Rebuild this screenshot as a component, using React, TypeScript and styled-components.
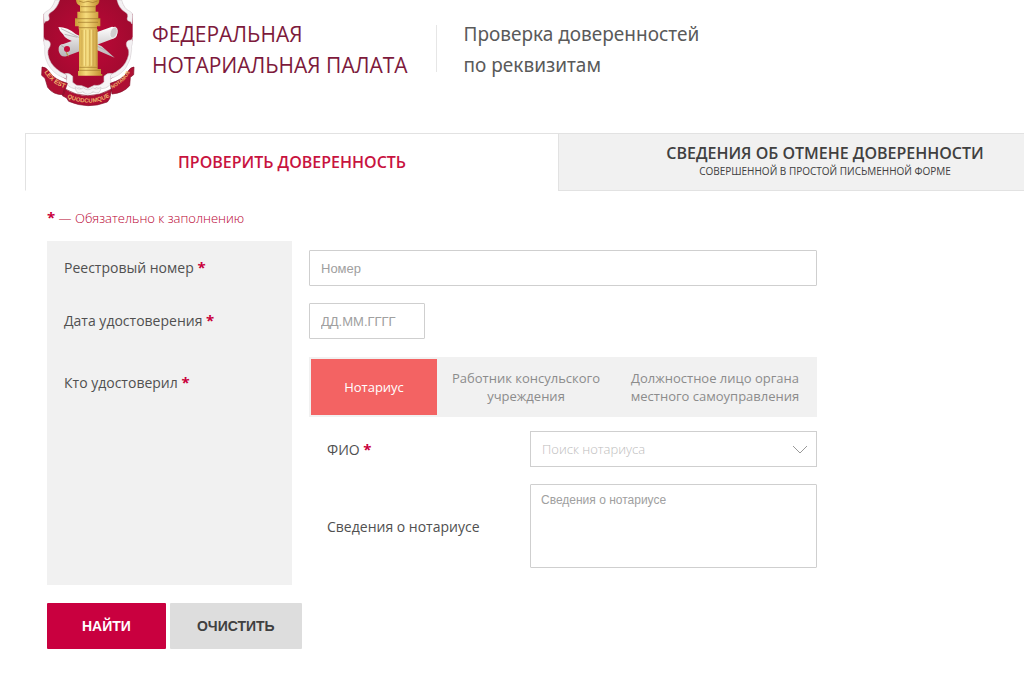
import React, { useState } from "react";
import styled, { createGlobalStyle } from "styled-components";

const GlobalStyle = createGlobalStyle`
  *, *::before, *::after { box-sizing: border-box; }
  body {
    margin: 0;
    background: #fff;
    color: #505050;
    font-family: "Open Sans", "Noto Sans", sans-serif;
    font-size: 14px;
  }
`;

const Page = styled.div`
  min-height: 100vh;
  overflow-x: clip;
`;

const Header = styled.header`
  display: flex;
  align-items: flex-start;
  min-height: 133px;
  padding-left: 41px;
`;

const Brand = styled.a`
  display: flex;
  gap: 17px;
  color: #7d1a3c;
  text-decoration: none;
`;

const Crest = styled.svg`
  display: block;
  flex: none;
  width: 94px;
  height: 107px;
`;

const BrandName = styled.span`
  padding-top: 19px;
  font-size: 21px;
  line-height: 31px;
  white-space: nowrap;
`;

const PageTitle = styled.h1`
  margin: 25px 0 0 28px;
  padding: 2px 0 0 27px;
  height: 47px;
  border-left: 1px solid #e6e6e6;
  display: flex;
  align-items: center;
  color: #5a5a5a;
  font: 400 19px/31px "Noto Sans", sans-serif;
  white-space: nowrap;
`;

const Tabs = styled.nav`
  display: grid;
  grid-template-columns: repeat(2, minmax(533px, 1fr));
  margin-left: 25px;
`;

const Tab = styled.button<{ $active?: boolean }>`
  display: flex;
  flex-direction: column;
  align-items: center;
  justify-content: center;
  height: 58px;
  padding: 0;
  border: 1px solid #e2e2e2;
  border-right: 0;
  border-bottom-color: ${(p) => (p.$active ? "transparent" : "#e2e2e2")};
  background: ${(p) => (p.$active ? "#fff" : "#f1f1f1")};
  color: ${(p) => (p.$active ? "#c8133f" : "#404040")};
  font: 600 16px/20px "Open Sans", sans-serif;
  text-transform: uppercase;
  cursor: pointer;
`;

const TabNote = styled.small`
  padding-bottom: 2px;
  font-size: 10px;
  font-weight: 500;
  line-height: 16px;
`;

const Form = styled.form`
  max-width: 817px;
  padding: 17px 0 0 47px;
`;

const Required = styled.p`
  margin: 0 0 13px;
  color: #b8002f;
  font-size: 13px;
  font-weight: 300;
  line-height: 20px;
`;

const Star = styled.b`
  color: #c9003c;
  font-size: 15px;
  font-weight: 700;
  line-height: 16px;
`;

const Row = styled.div`
  display: grid;
  grid-template-columns: 245px 1fr;
  column-gap: 17px;
`;

const LabelCell = styled.div<{ $tall?: boolean }>`
  padding: ${(p) => (p.$tall ? "26px" : "17px")} 17px 0;
  background: #f1f1f1;
  line-height: 20px;
`;

const ControlCell = styled.div<{ $tall?: boolean }>`
  padding: ${(p) => (p.$tall ? "10px 0 17px" : "9px 0 8px")};
`;

const TextInput = styled.input<{ $short?: boolean }>`
  display: block;
  width: ${(p) => (p.$short ? "116px" : "100%")};
  height: 36px;
  padding: 0 11px;
  border: 1px solid #cfcfcf;
  border-radius: 1px;
  background: #fff;
  color: #505050;
  font: 13px "Liberation Sans", sans-serif;
  &::placeholder { color: #a0a0a0; opacity: 1; }
`;

const Segments = styled.fieldset`
  display: grid;
  grid-template-columns: 126px 178px 1fr;
  margin: 0;
  padding: 2px;
  border: 0;
  min-width: 0;
  height: 60px;
  background: #f1f1f1;
`;

const Segment = styled.label`
  display: flex;
  align-items: center;
  justify-content: center;
  padding: 0 12px;
  color: #8c8c8c;
  font-size: 13px;
  line-height: 18px;
  text-align: center;
  cursor: pointer;
  &:has(input:checked) { background: #f36363; color: #fff; }
`;

const SegmentInput = styled.input`
  position: absolute;
  opacity: 0;
  pointer-events: none;
`;

const SubRow = styled.div<{ $top: number }>`
  display: grid;
  grid-template-columns: 203px 1fr;
  align-items: center;
  margin-top: ${(p) => p.$top}px;
  padding-left: 18px;
`;

const SelectWrap = styled.div`
  display: grid;
  align-items: center;
  & > * { grid-area: 1 / 1; }
`;

const Select = styled.select`
  appearance: none;
  width: 100%;
  height: 36px;
  padding: 0 11px;
  border: 1px solid #cfcfcf;
  border-radius: 0;
  background: #fff;
  color: #bdbdbd;
  font: 300 13px "Open Sans", sans-serif;
`;

const Chevron = styled.svg`
  justify-self: end;
  width: 16px;
  height: 9px;
  margin-right: 9px;
  pointer-events: none;
`;

const TextArea = styled.textarea`
  display: block;
  width: 100%;
  height: 84px;
  padding: 7px 10px;
  border: 1px solid #cfcfcf;
  border-radius: 1px;
  resize: none;
  font: 12px/16px "Liberation Sans", sans-serif;
  &::placeholder { color: #a0a0a0; opacity: 1; }
`;

const Actions = styled.div`
  display: flex;
  gap: 4px;
  margin-top: 18px;
`;

const ActionButton = styled.button<{ $primary?: boolean }>`
  height: 46px;
  padding: 0 ${(p) => (p.$primary ? "35px" : "27px")};
  border: 0;
  border-radius: 1px;
  background: ${(p) => (p.$primary ? "#c9003f" : "#dddddd")};
  color: ${(p) => (p.$primary ? "#fff" : "#404040")};
  font: 700 14px "Liberation Sans", sans-serif;
  text-transform: uppercase;
  cursor: pointer;
`;

function Emblem() {
  return (
    <Crest viewBox="36 0 282 321" role="img" aria-label="Эмблема палаты">
      <defs>
        <radialGradient id="field" cx="50%" cy="45%" r="60%">
          <stop offset="0" stopColor="#c00838" />
          <stop offset="1" stopColor="#9c0a2e" />
        </radialGradient>
        <linearGradient id="gold" x1="0" x2="1" y1="0" y2="0">
          <stop offset="0" stopColor="#c99a35" />
          <stop offset="0.4" stopColor="#f6dc7c" />
          <stop offset="1" stopColor="#c08c2c" />
        </linearGradient>
        <linearGradient id="paper" x1="0" x2="0" y1="0" y2="1">
          <stop offset="0" stopColor="#fff" />
          <stop offset="1" stopColor="#b8b4b6" />
        </linearGradient>
        <path id="mottoLeft" d="M46 216 Q64 250 108 265" />
        <path id="mottoBase" d="M114 293 Q177 324 242 291" />
        <path id="mottoRight" d="M249 266 Q289 248 309 205" />
      </defs>
      <path d="M80 0 Q67 36 44 42 V124 Q56 128 50 146 Q46 178 70 206 Q94 231 130 248 L177 279 L225 248 Q263 230 287 202 Q310 175 304 144 Q300 128 311 122 V42 Q287 34 276 0Z" fill="url(#field)" />
      <g fill="#f4f1f3" stroke="#cfc8cc" strokeWidth="1.5" strokeLinejoin="round">
        <path d="M78 0 H92 Q84 26 67 36 Q56 42 60 51 Q63 59 56 63 Q48 61 46 70 L44 46 Q43 39 51 35 Q70 27 78 0Z" />
        <path d="M264 0 H278 Q285 27 303 34 Q311 38 311 46 L309 72 Q305 62 298 63 Q292 58 296 50 Q298 41 288 36 Q270 26 264 0Z" />
        <path d="M44 112 Q45 122 55 121 Q67 125 63 139 Q54 151 57 164 Q62 190 82 206 Q94 218 112 224 L112 236 Q83 228 65 205 Q45 178 47 148 Q49 138 45 132Z" />
        <path d="M311 112 Q310 122 300 121 Q289 125 293 139 Q302 151 299 164 Q293 190 274 206 Q260 218 243 224 L243 236 Q272 228 290 205 Q308 178 308 148 Q306 138 310 132Z" />
      </g>
      <path d="M88 81 Q116 81 140 102 L218 139 L257 173 L205 151 L142 128 Q108 118 102 103 Q92 96 88 81Z" fill="url(#paper)" />
      <path d="M96 86 L230 151 M107 103 L145 112" stroke="#a49ea3" strokeWidth="2" />
      <path d="M89 143 Q91 133 103 132 L249 80 Q267 80 265 98 Q265 110 256 115 L112 169 Q94 173 89 153Z" fill="url(#paper)" />
      <ellipse cx="254" cy="98" rx="10" ry="17" transform="rotate(19 254 98)" fill="#d0cdcf" stroke="#f7f5f6" strokeWidth="2" />
      <path d="M97 137 Q112 141 113 166" fill="none" stroke="#aaa2a6" strokeWidth="3" />
      <circle cx="114" cy="147" r="9" fill="#c40d3b" />
      <path d="M112 156 L118 169" stroke="#bc983d" strokeWidth="3" />
      <path d="M141 0 H211 Q212 12 200 17 V37 H153 V17 Q141 12 141 0Z" fill="url(#gold)" />
      <path d="M145 35 H208 V55 H145Z M138 55 H214 V79 H204 V88 H149 V79 H138Z M150 88 H206 V202 H150Z M150 198 H206 V207 H216 V222 H220 V227 H147 V213 H150Z" fill="url(#gold)" />
      <g fill="none" stroke="#9d7429" strokeWidth="2">
        <path d="M153 36 H200 M139 56 H213 M147 67 H207 M149 83 H204 M151 202 H206 M151 211 H215 M150 3 Q162 11 177 4 Q192 12 205 3 M155 20 H199" />
        <path d="M159 90 V197 M170 89 V199 M181 89 V199 M192 89 V199 M202 89 V197" strokeOpacity="0.45" />
      </g>
      <path d="M166 89 V197 M177 89 V197 M188 89 V197" stroke="#fff0a2" strokeWidth="3" strokeOpacity="0.65" />
      <g fill="#f6f4f5" stroke="#d0cacd" strokeWidth="2">
        <path d="M108 221 Q120 217 131 229 L131 247 Q142 260 158 257 L177 265 L196 256 Q214 259 225 245 L225 229 Q235 217 249 221 Q243 224 244 236 Q251 256 229 264 Q216 269 202 263 Q192 266 193 277 Q178 281 163 277 Q161 266 150 263 Q139 270 127 263 Q108 255 113 237 Q117 226 108 221Z" />
        <path d="M138 260 Q142 288 162 275 Q175 291 192 275 Q214 288 216 261 Q203 272 192 263 Q176 276 163 263 Q151 273 138 260Z" />
      </g>
      <path d="M39 201 Q51 200 62 217 Q76 239 115 250 L104 284 Q72 285 56 262 L48 235 L38 226Z M315 201 Q304 201 295 217 Q279 240 244 250 L249 282 Q283 279 302 257 L304 232 L314 224Z M106 266 Q176 308 248 267 L242 296 L235 306 Q177 329 119 304 L113 294 L100 287Z" fill="#ae1033" stroke="#830f29" strokeWidth="2" />
      <g fill="#f0b56c" fontFamily="Liberation Sans, sans-serif" fontWeight="700">
        <text fontSize="19"><textPath href="#mottoLeft">LEX EST</textPath></text>
        <text fontSize="18"><textPath href="#mottoBase">QUODCUMQUE</textPath></text>
        <text fontSize="15"><textPath href="#mottoRight">NOTAMUS</textPath></text>
      </g>
    </Crest>
  );
}

const certifiers = [
  "Нотариус",
  "Работник консульского учреждения",
  "Должностное лицо органа местного самоуправления",
];

export default function App() {
  const [certifier, setCertifier] = useState(0);
  return (
    <Page>
      <GlobalStyle />
      <Header>
        <Brand href="#">
          <Emblem />
          <BrandName>ФЕДЕРАЛЬНАЯ<br />НОТАРИАЛЬНАЯ ПАЛАТА</BrandName>
        </Brand>
        <PageTitle><span>Проверка доверенностей<br />по реквизитам</span></PageTitle>
      </Header>
      <Tabs>
        <Tab type="button" $active>Проверить доверенность</Tab>
        <Tab type="button">
          Сведения об отмене доверенности
          <TabNote>совершенной в простой письменной форме</TabNote>
        </Tab>
      </Tabs>
      <Form onSubmit={(e) => e.preventDefault()}>
        <Required><Star>*</Star> — Обязательно к заполнению</Required>
        <Row>
          <LabelCell><label htmlFor="number">Реестровый номер <Star>*</Star></label></LabelCell>
          <ControlCell><TextInput id="number" placeholder="Номер" /></ControlCell>
        </Row>
        <Row>
          <LabelCell><label htmlFor="date">Дата удостоверения <Star>*</Star></label></LabelCell>
          <ControlCell><TextInput id="date" placeholder="ДД.ММ.ГГГГ" $short /></ControlCell>
        </Row>
        <Row>
          <LabelCell $tall><span id="certifier">Кто удостоверил <Star>*</Star></span></LabelCell>
          <ControlCell $tall>
            <Segments aria-labelledby="certifier">
              {certifiers.map((name, i) => (
                <Segment key={name}>
                  <SegmentInput type="radio" name="certifier" checked={certifier === i} onChange={() => setCertifier(i)} />
                  {name}
                </Segment>
              ))}
            </Segments>
            <SubRow $top={14}>
              <label htmlFor="notary">ФИО <Star>*</Star></label>
              <SelectWrap>
                <Select id="notary"><option>Поиск нотариуса</option></Select>
                <Chevron viewBox="0 0 16 9" aria-hidden="true">
                  <path d="M1 1l7 7 7-7" fill="none" stroke="#999" />
                </Chevron>
              </SelectWrap>
            </SubRow>
            <SubRow $top={17}>
              <label htmlFor="details">Сведения о нотариусе</label>
              <TextArea id="details" placeholder="Сведения о нотариусе" />
            </SubRow>
          </ControlCell>
        </Row>
        <Actions>
          <ActionButton type="submit" $primary>Найти</ActionButton>
          <ActionButton type="reset">Очистить</ActionButton>
        </Actions>
      </Form>
    </Page>
  );
}
